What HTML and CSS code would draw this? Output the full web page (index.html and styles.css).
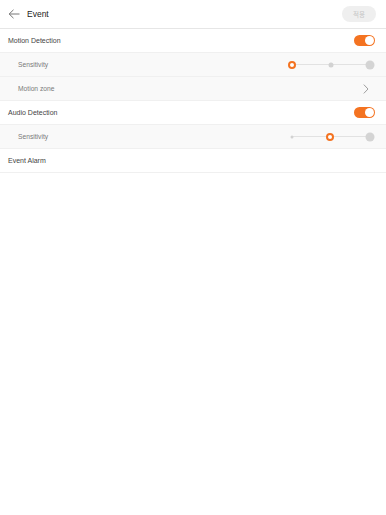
FILE: index.html
```html
<!DOCTYPE html>
<html>
<head>
<meta charset="utf-8">
<link rel="stylesheet" href="styles.css">
</head>
<body>
<div class="app">
  <header class="topbar">
    <div class="title-wrap">
      <svg class="back" width="12" height="10" viewBox="0 0 12 10"><path d="M5.5 0.8 L1.2 5 L5.5 9.2 M1.2 5 H11.5" fill="none" stroke="#666" stroke-width="0.9"/></svg>
      <span class="title">Event</span>
    </div>
    <button class="apply">적용</button>
  </header>

  <div class="row">
    <span class="label">Motion Detection</span>
    <span class="toggle on"><span class="knob"></span></span>
  </div>
  <div class="row sub">
    <span class="label">Sensitivity</span>
    <div class="slider">
      <span class="track"></span>
      <span class="dot ring"></span>
      <span class="dot mid"></span>
      <span class="dot big"></span>
    </div>
  </div>
  <div class="row sub">
    <span class="label">Motion zone</span>
    <svg class="chev" width="6" height="10" viewBox="0 0 6 10"><path d="M0.8 0.6 L5 5 L0.8 9.4" fill="none" stroke="#888" stroke-width="0.8"/></svg>
  </div>
  <div class="row">
    <span class="label">Audio Detection</span>
    <span class="toggle on"><span class="knob"></span></span>
  </div>
  <div class="row sub">
    <span class="label">Sensitivity</span>
    <div class="slider">
      <span class="track"></span>
      <span class="dot small"></span>
      <span class="dot ring"></span>
      <span class="dot big"></span>
    </div>
  </div>
  <div class="row">
    <span class="label">Event Alarm</span>
  </div>
</div>
</body>
</html>
```
FILE: styles.css
```css
html, body {
  margin: 0;
  padding: 0;
  background: #fff;
}
body {
  font-family: "Liberation Sans", Arial, sans-serif;
  color: #333;
}
.app {
  width: 386px;
}
.topbar {
  height: 28px;
  border-bottom: 1px solid #e6e6e6;
  display: flex;
  align-items: center;
  justify-content: space-between;
  padding: 0 10px 0 8px;
}
.title-wrap {
  display: flex;
  align-items: center;
  gap: 7px;
}
.back {
  display: block;
}
.title {
  font-size: 8.5px;
  color: #222;
}
.apply {
  width: 34px;
  height: 16px;
  border: none;
  border-radius: 8px;
  background: #efefef;
  color: #c6c6c6;
  font-family: "Noto Sans CJK KR", "Noto Sans", sans-serif;
  font-size: 6.5px;
  padding: 0;
}
.row {
  height: 23px;
  border-bottom: 1px solid #f0f0f0;
  display: flex;
  align-items: center;
  justify-content: space-between;
  padding: 0 12px 0 8px;
  font-size: 7px;
  color: #444;
}
.row.sub {
  background: #f9f9f9;
  padding-left: 18px;
  font-size: 6.7px;
  color: #7a7a7a;
}
.toggle {
  width: 21px;
  height: 11px;
  border-radius: 6px;
  background: #f47321;
  position: relative;
  margin-right: -0.5px;
}
.toggle .knob {
  position: absolute;
  right: 1px;
  top: 1px;
  width: 9px;
  height: 9px;
  border-radius: 50%;
  background: #fff;
}
.slider {
  width: 88px;
  height: 10px;
  position: relative;
  margin-right: -2px;
}
.track {
  position: absolute;
  left: 4px;
  right: 4px;
  top: 4.5px;
  height: 1px;
  background: #e2e2e2;
}
.dot {
  position: absolute;
  top: 50%;
  transform: translate(-50%, -50%);
  border-radius: 50%;
}
.dot.ring {
  width: 4px;
  height: 4px;
  border: 2px solid #f47321;
  background: #fff;
}
.dot.mid {
  left: 43px;
  width: 5px;
  height: 5px;
  background: #d2d2d2;
}
.dot.small {
  left: 4px;
  width: 3px;
  height: 3px;
  background: #d2d2d2;
}
.dot.big {
  left: 82px;
  width: 9px;
  height: 9px;
  background: #d4d4d4;
}
.row .slider .dot.ring:nth-child(2) {
  left: 4px;
}
.row .slider .dot.ring:nth-child(3) {
  left: 42px;
}
.chev {
  display: block;
  margin-right: 5px;
}
```
